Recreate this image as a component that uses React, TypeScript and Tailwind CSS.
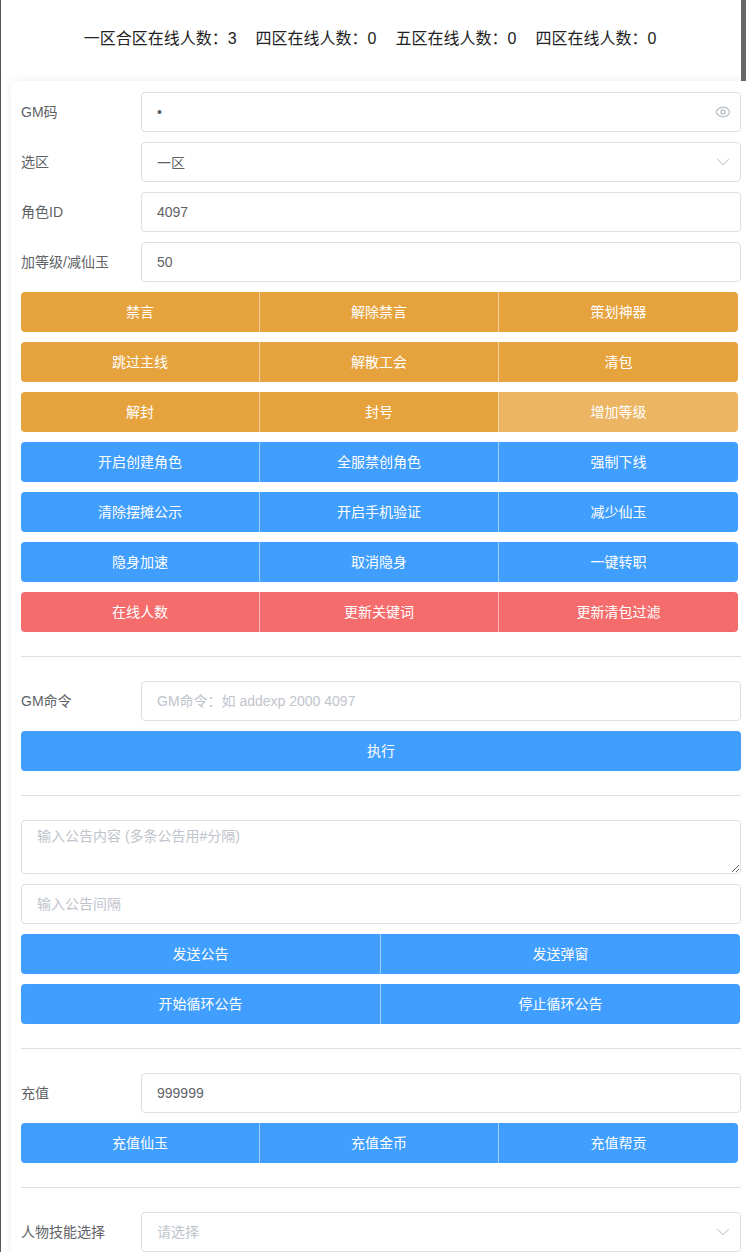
import { ChevronDown, Eye } from "lucide-react";

const font = "font-['Liberation_Sans','Noto_Sans_CJK_SC',sans-serif]";

const inputStyles =
  "h-10 w-full rounded-[4px] border border-[#dcdfe6] bg-white px-[15px] text-sm text-[#606266] outline-none placeholder:text-[#c0c4cc]";

const colors = {
  orange: "bg-[#e6a23c]",
  blue: "bg-[#409eff]",
  red: "bg-[#f56c6c]",
};

type Color = keyof typeof colors;

const threeWide = ["w-[238px]", "w-[239px]", "w-[240px]"];
const twoWide = ["w-[359px]", "w-[360px]"];

const Field = ({
  label,
  children,
}: {
  label: string;
  children: React.ReactNode;
}) => (
  <div className="flex items-center">
    <label className="w-[120px] shrink-0 text-sm text-[#606266]">{label}</label>
    <div className="relative min-w-0 flex-1">{children}</div>
  </div>
);

const ButtonGroup = ({
  items,
  color,
  widths,
  light,
}: {
  items: string[];
  color: Color;
  widths: string[];
  light?: string;
}) => (
  <div className="flex">
    {items.map((item, i) => (
      <button
        key={item}
        type="button"
        className={`h-10 ${widths[i]} text-sm text-white ${
          item === light ? "bg-[#ebb563]" : colors[color]
        } ${i === 0 ? "rounded-l-[4px]" : "border-l border-white/50"} ${
          i === items.length - 1 ? "rounded-r-[4px]" : ""
        }`}
      >
        {item}
      </button>
    ))}
  </div>
);

const Divider = () => <div className="my-[24px] h-px bg-[#dcdfe6]" />;

const rows: { items: string[]; color: Color }[] = [
  { items: ["禁言", "解除禁言", "策划神器"], color: "orange" },
  { items: ["跳过主线", "解散工会", "清包"], color: "orange" },
  { items: ["解封", "封号", "增加等级"], color: "orange" },
  { items: ["开启创建角色", "全服禁创角色", "强制下线"], color: "blue" },
  { items: ["清除摆摊公示", "开启手机验证", "减少仙玉"], color: "blue" },
  { items: ["隐身加速", "取消隐身", "一键转职"], color: "blue" },
  { items: ["在线人数", "更新关键词", "更新清包过滤"], color: "red" },
];

export default function App() {
  return (
    <div className={`relative h-[1252px] overflow-hidden bg-white ${font}`}>
      <div className="absolute inset-y-0 left-0 w-px bg-[#555555]" />
      <div className="absolute right-0 top-0 h-[81px] w-[5px] bg-[#666666]" />

      <header className="flex h-[81px] items-center justify-center gap-[19px] pb-[3px] pr-[6px] text-base text-[#222222]">
        <span>一区合区在线人数：3</span>
        <span>四区在线人数：0</span>
        <span>五区在线人数：0</span>
        <span>四区在线人数：0</span>
      </header>

      <main className="ml-[11px] flex flex-col bg-white pl-[10px] pr-[5px] pt-[11px] shadow-[0_0_10px_rgba(0,0,0,0.07)]">
        <div className="flex flex-col gap-[10px]">
          <Field label="GM码">
            <input className={inputStyles} type="password" value="1" readOnly />
            <Eye
              strokeWidth={2.2}
              className="absolute right-[10px] top-[12px] size-4 text-[#c0c4cc]"
            />
          </Field>
          <Field label="选区">
            <input className={inputStyles} value="一区" readOnly />
            <ChevronDown
              strokeWidth={1.1}
              className="absolute right-[7px] top-[9px] size-[22px] text-[#c0c4cc]"
            />
          </Field>
          <Field label="角色ID">
            <input className={inputStyles} value="4097" readOnly />
          </Field>
          <Field label="加等级/减仙玉">
            <input className={inputStyles} value="50" readOnly />
          </Field>
          {rows.map((row) => (
            <ButtonGroup
              key={row.items[0]}
              items={row.items}
              color={row.color}
              widths={threeWide}
              light="增加等级"
            />
          ))}
        </div>

        <Divider />

        <div className="flex flex-col gap-[10px]">
          <Field label="GM命令">
            <input
              className={inputStyles}
              placeholder="GM命令：如 addexp 2000 4097"
              readOnly
            />
          </Field>
          <button
            type="button"
            className="h-10 rounded-[4px] bg-[#409eff] text-sm text-white"
          >
            执行
          </button>
        </div>

        <Divider />

        <div className="flex flex-col gap-[10px]">
          <textarea
            className="block h-[54px] w-full rounded-[4px] border border-[#dcdfe6] px-[15px] py-[5px] text-sm leading-[21px] text-[#606266] outline-none placeholder:text-[#c0c4cc]"
            placeholder="输入公告内容 (多条公告用#分隔)"
            readOnly
          />
          <input className={inputStyles} placeholder="输入公告间隔" readOnly />
          <ButtonGroup
            items={["发送公告", "发送弹窗"]}
            color="blue"
            widths={twoWide}
          />
          <ButtonGroup
            items={["开始循环公告", "停止循环公告"]}
            color="blue"
            widths={twoWide}
          />
        </div>

        <Divider />

        <div className="flex flex-col gap-[10px]">
          <Field label="充值">
            <input className={inputStyles} value="999999" readOnly />
          </Field>
          <ButtonGroup
            items={["充值仙玉", "充值金币", "充值帮贡"]}
            color="blue"
            widths={threeWide}
          />
        </div>

        <Divider />

        <Field label="人物技能选择">
          <input className={inputStyles} placeholder="请选择" readOnly />
          <ChevronDown
            strokeWidth={1.1}
            className="absolute right-[7px] top-[9px] size-[22px] text-[#c0c4cc]"
          />
        </Field>
      </main>
    </div>
  );
}
